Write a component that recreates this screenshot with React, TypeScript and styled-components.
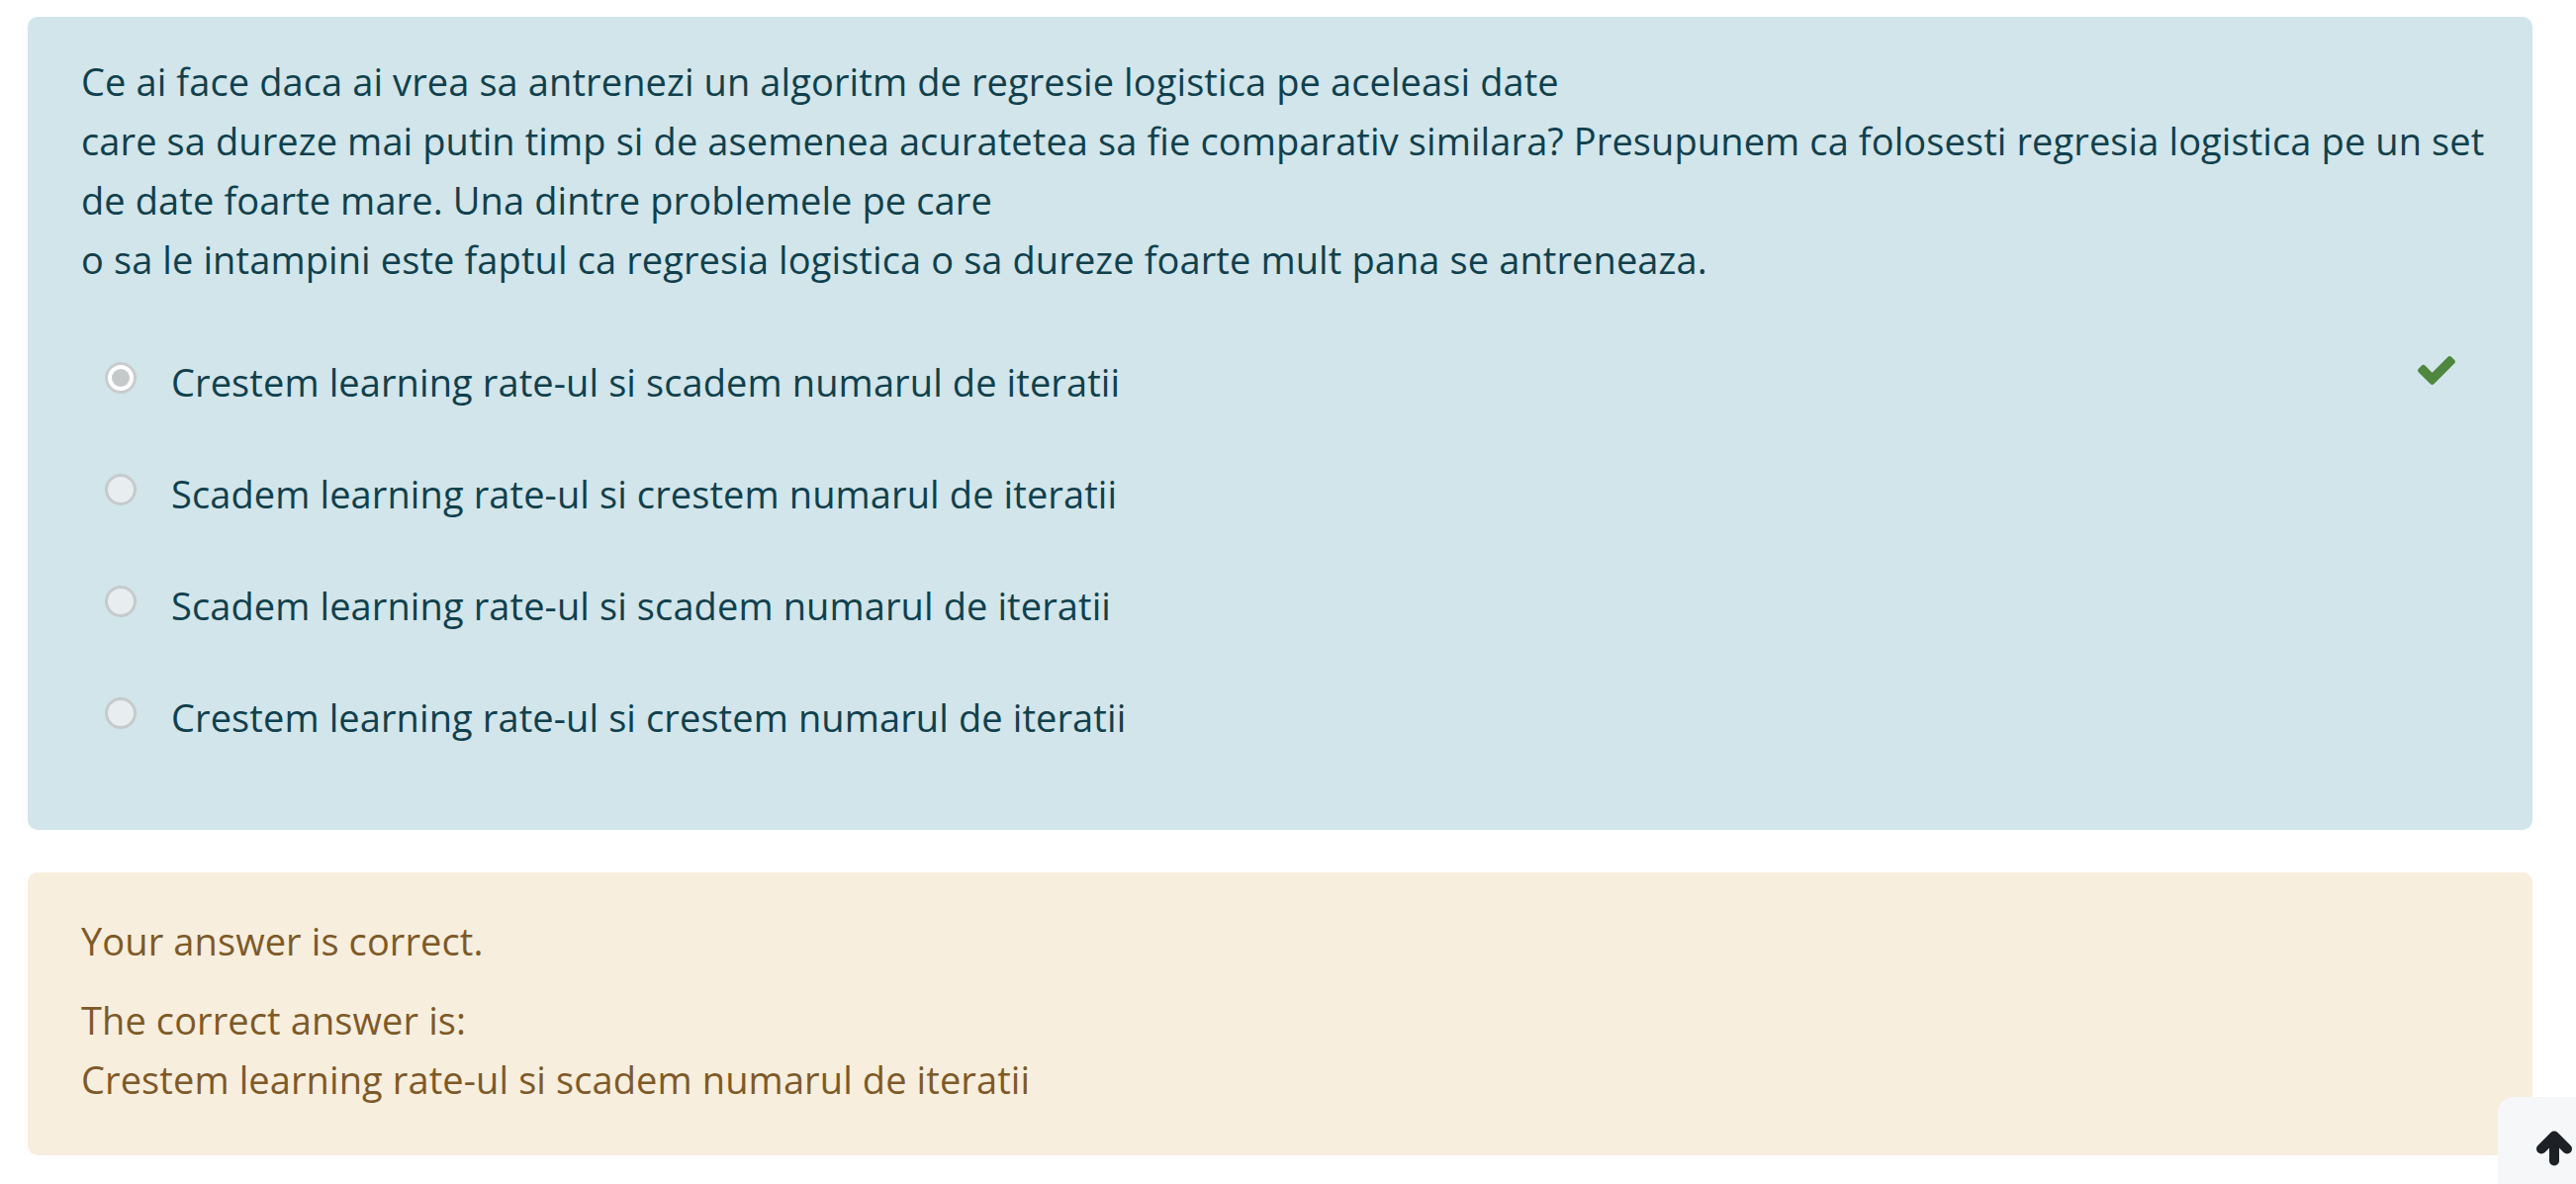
import React from 'react';
import styled, { createGlobalStyle } from 'styled-components';

const options = [
  { text: 'Crestem learning rate-ul si scadem numarul de iteratii', checked: true, correct: true },
  { text: 'Scadem learning rate-ul si crestem numarul de iteratii', checked: false, correct: false },
  { text: 'Scadem learning rate-ul si scadem numarul de iteratii', checked: false, correct: false },
  { text: 'Crestem learning rate-ul si crestem numarul de iteratii', checked: false, correct: false },
];

function CheckIcon() {
  return (
    <svg width="38" height="29" viewBox="121 334 1550 1188" aria-hidden="true">
      <path
        fill="currentColor"
        d="M1671 566q0 40-28 68l-724 724-136 136q-28 28-68 28t-68-28l-136-136-362-362q-28-28-28-68t28-68l136-136q28-28 68-28t68 28l294 295 656-657q28-28 68-28t68 28l136 136q28 28 28 68z"
      />
    </svg>
  );
}

function ArrowUpIcon() {
  return (
    <svg width="38" height="36" viewBox="0 0 38 36" aria-hidden="true">
      <g fill="none" stroke="currentColor" strokeWidth="10" strokeLinecap="round" strokeLinejoin="round">
        <polyline points="6,18.5 19,5.5 32,18.5" />
        <line x1="19" y1="7" x2="19" y2="30.5" />
      </g>
    </svg>
  );
}

function App() {
  return (
    <>
      <GlobalStyle />
      <Page>
        <Formulation>
          <QuestionText>
            Ce ai face daca ai vrea sa antrenezi un algoritm de regresie logistica pe aceleasi date
            <br />
            care sa dureze mai putin timp si de asemenea acuratetea sa fie comparativ similara? Presupunem ca folosesti regresia logistica pe un set
            <br />
            de date foarte mare. Una dintre problemele pe care
            <br />
            o sa le intampini este faptul ca regresia logistica o sa dureze foarte mult pana se antreneaza.
          </QuestionText>
          <AnswerList>
            {options.map((opt) => (
              <AnswerRow key={opt.text}>
                <Radio $checked={opt.checked} />
                <AnswerLabel>{opt.text}</AnswerLabel>
                {opt.correct && (
                  <CorrectMark>
                    <CheckIcon />
                  </CorrectMark>
                )}
              </AnswerRow>
            ))}
          </AnswerList>
        </Formulation>
        <Outcome>
          <Feedback>Your answer is correct.</Feedback>
          <Feedback>
            The correct answer is:
            <br />
            Crestem learning rate-ul si scadem numarul de iteratii
          </Feedback>
        </Outcome>
      </Page>
      <BackToTop>
        <ArrowUpIcon />
      </BackToTop>
    </>
  );
}

const GlobalStyle = createGlobalStyle`
  html, body {
    margin:0;
    padding:0;
    background:#fff;
  }
  body{
    font-family: "Open Sans", "Noto Sans", sans-serif;
    font-size:38px;
    letter-spacing:0.1px;
    line-height:60px;
    overflow:hidden;
  }
`;

const Page = styled.main`
  padding:17px 44px 0 28px;
  display:flex;
  flex-direction:column;
  gap:43px;
`;

const Formulation = styled.section`
  background:#d1e5ea;
  color:#10404d;
  border-radius:10px;
  padding:35px 54px 58px;
`;

const QuestionText = styled.div`
  white-space:nowrap;
`;

const AnswerList = styled.div`
  margin-top:37px;
  display:flex;
  flex-direction:column;
`;

const AnswerRow = styled.div`
  display:flex;
  align-items:center;
  padding:26.5px 24px;
`;

const Radio = styled.span<{ $checked: boolean }>`
  flex:none;
  box-sizing:border-box;
  width:32px;
  height:32px;
  margin-top:-8px;
  margin-right:35px;
  border-radius:50%;
  border:3px solid ${(p) => (p.$checked ? '#c9cccd' : '#c6cacc')};
  background:${(p) => (p.$checked ? '#fff' : '#e8eef0')};
  display:flex;
  align-items:center;
  justify-content:center;
  &::after{
    content:'';
    display:${(p) => (p.$checked ? 'block' : 'none')};
    width:18px;
    height:18px;
    border-radius:50%;
    background:#c6c9c9;
  }
`;

const AnswerLabel = styled.span`
  flex:1;
`;

const CorrectMark = styled.span`
  color:#4e873d;
  display:flex;
  margin-top:-23px;
`;

const Outcome = styled.section`
  background:#f8eedd;
  color:#7d5a29;
  border-radius:10px;
  padding:39px 54px 27px;
`;

const Feedback = styled.p`
  margin:0 0 20px;
`;

const BackToTop = styled.button`
  position:fixed;
  right:-35px;
  bottom:-26px;
  width:114px;
  height:114px;
  padding:0 0 10px;
  border:none;
  border-radius:16px;
  background:#f6f7f9;
  color:#1d2125;
  display:flex;
  align-items:center;
  justify-content:center;
  cursor:pointer;
`;

export default App;
